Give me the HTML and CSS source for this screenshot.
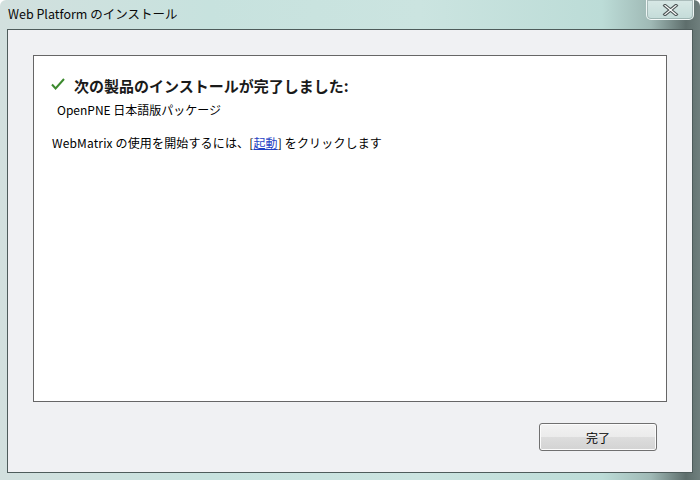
FILE: index.html
```html
<!DOCTYPE html>
<html lang="ja">
<head>
<meta charset="utf-8">
<title>Web Platform のインストール</title>
<link rel="stylesheet" href="styles.css">
</head>
<body>
<div class="window">
  <div class="titlebar">
    <span class="title">Web Platform のインストール</span>
    <span class="close">
      <svg width="17" height="12" viewBox="0 0 17 12">
        <path d="M3 1.5 L14 10.5 M14 1.5 L3 10.5" stroke="#4d5656" stroke-width="3.4" stroke-linecap="square" fill="none"/>
        <path d="M3 1.5 L14 10.5 M14 1.5 L3 10.5" stroke="#ffffff" stroke-width="1.2" stroke-linecap="square" fill="none"/>
      </svg>
    </span>
  </div>
  <div class="client">
    <div class="panel">
      <div class="heading">
        <svg class="check" width="14" height="12" viewBox="0 0 14 12">
          <path d="M1 6.5 L4.6 10.5 L13 1" stroke="#3c8a2e" stroke-width="2" fill="none"/>
        </svg>
        <span>次の製品のインストールが完了しました:</span>
      </div>
      <div class="product">OpenPNE 日本語版パッケージ</div>
      <div class="note">WebMatrix の使用を開始するには、[<a class="link" href="#">起動</a>] をクリックします</div>
    </div>
    <div class="actions">
      <button class="btn">完了</button>
    </div>
  </div>
</div>
</body>
</html>
```
FILE: styles.css
```css
* { box-sizing: border-box; }
html, body {
  margin: 0;
  padding: 0;
  width: 700px;
  height: 480px;
  overflow: hidden;
}
body {
  font-family: "Noto Sans CJK JP", "Noto Sans", sans-serif;
  color: #000;
}
.window {
  width: 700px;
  height: 480px;
  display: flex;
  flex-direction: column;
  background: linear-gradient(to right, #d2e0de 0%, #c7e2de 30%, #cbe4e0 60%, #bcdcd7 86%, #9fb9b5 93%, #5e6e6c 98%, #6f7f7d 100%);
  border-top-left-radius: 6px;
  border-top-right-radius: 6px;
}
.titlebar {
  height: 29px;
  flex: none;
  display: flex;
  align-items: flex-start;
  justify-content: space-between;
  padding-left: 8px;
}
.title {
  font-size: 12.5px;
  line-height: 29px;
  color: #0a0a0a;
  margin-top: -1px;
}
.close {
  width: 48px;
  height: 20px;
  margin-right: 6px;
  border: 1px solid rgba(255,255,255,0.7);
  border-top: none;
  border-radius: 0 0 5px 5px;
  box-shadow: inset 0 0 0 1px rgba(90,110,108,0.35);
  display: flex;
  align-items: center;
  justify-content: center;
  background: linear-gradient(#d8e8e6, #c4dcd9);
}
.client {
  flex: 1;
  margin: 0 7px 7px 7px;
  border: 1px solid #4e5c5b;
  background: #f0f1f3;
  padding: 25px 25px 0 25px;
  display: flex;
  flex-direction: column;
}
.panel {
  height: 347px;
  flex: none;
  background: #fff;
  border: 1px solid #666;
  padding: 19px 0 0 17px;
}
.heading {
  display: flex;
  align-items: center;
  height: 20px;
  font-size: 15px;
  font-weight: bold;
  color: #1a1a1a;
}
.check {
  margin-right: 9px;
  margin-top: -2px;
}
.product {
  margin-top: 7px;
  margin-left: 6px;
  font-size: 12px;
  line-height: 16px;
}
.note {
  margin-top: 17px;
  margin-left: 1px;
  font-size: 12px;
  line-height: 16px;
  letter-spacing: 0.15px;
}
.link {
  color: #1f3fc4;
  text-decoration: underline;
}
.actions {
  display: flex;
  justify-content: flex-end;
  padding: 21px 10px 0 0;
}
.btn {
  width: 118px;
  height: 28px;
  border: 1px solid #707070;
  border-radius: 3px;
  background: linear-gradient(#f3f3f3 0%, #ebebeb 49%, #dddddd 50%, #d3d3d3 100%);
  box-shadow: inset 0 0 0 1px #fcfcfc;
  font-family: "Noto Sans CJK JP", sans-serif;
  font-size: 12px;
  color: #000;
  padding: 0;
}
```
